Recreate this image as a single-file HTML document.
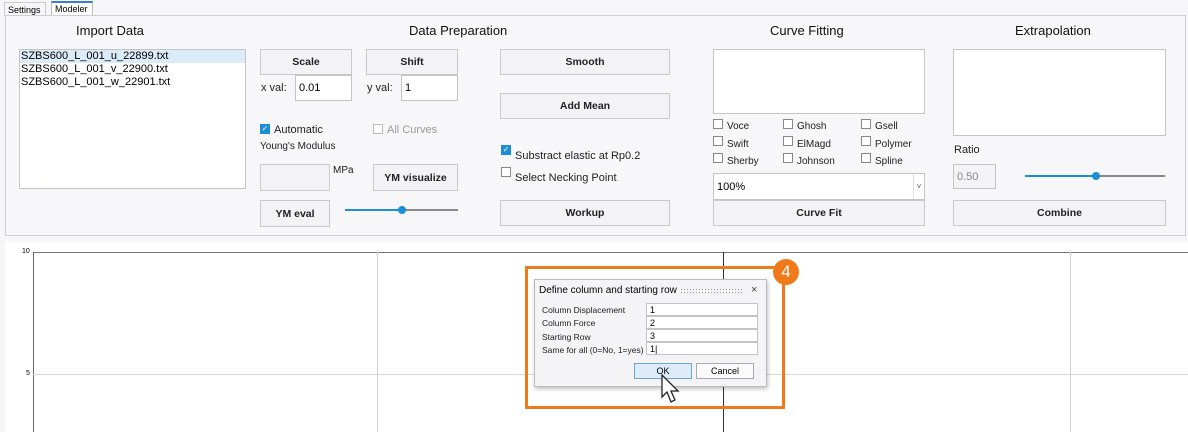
<!DOCTYPE html><html><head><style>
body{margin:0;width:1188px;height:432px;overflow:hidden;background:#f6f6f8;font-family:"Liberation Sans",sans-serif;position:relative}
div,span{position:absolute;box-sizing:border-box}
.b{background:#f3f3f5;border:1px solid #c9c9cc;font-size:10.5px;font-weight:bold;display:flex;align-items:center;justify-content:center;color:#222}
.in{background:#fff;border:1px solid #c4c4c6;font-size:11px;padding-left:3px;display:flex;align-items:center}
.t{font-size:13px;color:#111}
.s{font-size:10px;color:#222}
.cb{width:10px;height:10px;border:1px solid #888;background:#fff}
.ck{width:10px;height:10px;background:#1a8fd6;color:#fff;font-size:8px;line-height:10px;text-align:center}
</style></head><body>
<div style="left:4px;top:2px;width:42px;height:14px;border:1px solid #ccc;border-bottom:none;font-size:9px;padding:2px 3px">Settings</div>
<div style="left:51px;top:1px;width:42px;height:15px;border:1px solid #bbb;border-bottom:none;border-top:2px solid #3a7bd5;background:#fff;font-size:9px;padding:1px 3px">Modeler</div>
<div style="left:5px;top:15px;width:1181px;height:221px;border:1px solid #cfcfd2;background:#f7f7f9"></div>
<span class="t" style="left:76px;top:23px">Import Data</span>
<span class="t" style="left:409px;top:23px">Data Preparation</span>
<span class="t" style="left:770px;top:23px">Curve Fitting</span>
<span class="t" style="left:1015px;top:23px">Extrapolation</span>
<div style="left:19px;top:49px;width:227px;height:140px;background:#fff;border:1px solid #c4c4c6"></div>
<div style="left:20px;top:50px;width:225px;height:13px;background:#dcebf8"></div>
<span style="left:21px;top:50px;font-size:11px;line-height:13px">SZBS600_L_001_u_22899.txt<br>SZBS600_L_001_v_22900.txt<br>SZBS600_L_001_w_22901.txt</span>
<div class="b" style="left:260px;top:49px;width:92px;height:26px">Scale</div>
<div class="b" style="left:366px;top:49px;width:92px;height:26px">Shift</div>
<span class="s" style="left:261px;top:82px;font-size:11px">x val:</span>
<div class="in" style="left:295px;top:75px;width:57px;height:26px">0.01</div>
<span class="s" style="left:367px;top:82px;font-size:11px">y val:</span>
<div class="in" style="left:401px;top:75px;width:57px;height:26px">1</div>
<div class="ck" style="left:260px;top:124px">✓</div>
<span class="s" style="left:274px;top:124px;font-size:11px">Automatic</span>
<div class="cb" style="left:373px;top:124px;border-color:#bbb"></div>
<span class="s" style="left:387px;top:124px;font-size:11px;color:#999">All Curves</span>
<span class="s" style="left:260px;top:141px">Young's Modulus</span>
<div style="left:260px;top:164px;width:70px;height:27px;border:1px solid #ccc;background:#f3f3f5"></div>
<span class="s" style="left:333px;top:165px">MPa</span>
<div class="b" style="left:373px;top:164px;width:85px;height:27px">YM visualize</div>
<div class="b" style="left:260px;top:200px;width:70px;height:27px">YM eval</div>
<div style="left:345px;top:209px;width:57px;height:2px;background:#1a8fd6"></div>
<div style="left:402px;top:209px;width:56px;height:2px;background:#888"></div>
<div style="left:398px;top:206px;width:8px;height:8px;border-radius:50%;background:#1a8fd6"></div>
<div class="b" style="left:500px;top:49px;width:170px;height:26px">Smooth</div>
<div class="b" style="left:500px;top:93px;width:170px;height:26px">Add Mean</div>
<div class="ck" style="left:501px;top:145px">✓</div>
<span class="s" style="left:515px;top:150px;font-size:11px">Substract elastic at Rp0.2</span>
<div class="cb" style="left:501px;top:167px"></div>
<span class="s" style="left:515px;top:172px;font-size:11px">Select Necking Point</span>
<div class="b" style="left:500px;top:200px;width:170px;height:26px">Workup</div>
<div style="left:713px;top:49px;width:212px;height:65px;background:#fff;border:1px solid #c4c4c6"></div>
<div class="cb" style="left:713px;top:119px"></div><span class="s" style="left:727px;top:121px">Voce</span>
<div class="cb" style="left:713px;top:136px"></div><span class="s" style="left:727px;top:139px">Swift</span>
<div class="cb" style="left:713px;top:153px"></div><span class="s" style="left:727px;top:156px">Sherby</span>
<div class="cb" style="left:783px;top:119px"></div><span class="s" style="left:797px;top:121px">Ghosh</span>
<div class="cb" style="left:783px;top:136px"></div><span class="s" style="left:797px;top:139px">ElMagd</span>
<div class="cb" style="left:783px;top:153px"></div><span class="s" style="left:797px;top:156px">Johnson</span>
<div class="cb" style="left:861px;top:119px"></div><span class="s" style="left:875px;top:121px">Gsell</span>
<div class="cb" style="left:861px;top:136px"></div><span class="s" style="left:875px;top:139px">Polymer</span>
<div class="cb" style="left:861px;top:153px"></div><span class="s" style="left:875px;top:156px">Spline</span>
<div class="in" style="left:713px;top:173px;width:212px;height:27px">100%</div>
<div style="left:913px;top:174px;width:11px;height:25px;border-left:1px solid #ddd;font-size:8px;color:#555;text-align:center;line-height:25px">˅</div>
<div class="b" style="left:713px;top:200px;width:212px;height:26px">Curve Fit</div>
<div style="left:953px;top:49px;width:213px;height:87px;background:#fff;border:1px solid #c4c4c6"></div>
<span class="s" style="left:954px;top:144px;font-size:11px">Ratio</span>
<div class="in" style="left:953px;top:164px;width:43px;height:25px;background:#f3f3f5;color:#888">0.50</div>
<div style="left:1025px;top:175px;width:71px;height:2px;background:#1a8fd6"></div>
<div style="left:1096px;top:175px;width:69px;height:2px;background:#888"></div>
<div style="left:1092px;top:172px;width:8px;height:8px;border-radius:50%;background:#1a8fd6"></div>
<div class="b" style="left:953px;top:200px;width:213px;height:26px">Combine</div>
<div style="left:5px;top:242px;width:1183px;height:190px;background:#fff"></div>
<div style="left:33px;top:252px;width:1px;height:180px;background:#666"></div>
<div style="left:33px;top:252px;width:1155px;height:1px;background:#777"></div>
<div style="left:33px;top:374px;width:1155px;height:1px;background:#d8d8d8"></div>
<div style="left:377px;top:252px;width:1px;height:180px;background:#d0d0d0"></div>
<div style="left:723px;top:252px;width:1px;height:180px;background:#333"></div>
<div style="left:1070px;top:252px;width:1px;height:180px;background:#d0d0d0"></div>
<span style="left:22px;top:248px;font-size:7px">10</span>
<span style="left:26px;top:370px;font-size:7px">5</span>
<div style="left:534px;top:279px;width:233px;height:108px;background:#f4f4f6;border:1px solid #bbb;box-shadow:1px 2px 4px rgba(0,0,0,.25)"></div>
<span style="left:539px;top:285px;font-size:10px">Define column and starting row</span>
<div style="left:680px;top:288px;width:64px;height:6px;background-image:radial-gradient(circle,#999 0.7px,transparent 0.8px);background-size:3px 3px"></div>
<span style="left:751px;top:284px;font-size:11px;color:#444">×</span>
<span class="s" style="left:542px;top:304px;font-size:8.5px;line-height:13.3px">Column Displacement<br>Column Force<br>Starting Row<br>Same for all (0=No, 1=yes)</span>
<div class="in" style="left:646px;top:303px;width:112px;height:13px;font-size:9px">1</div>
<div class="in" style="left:646px;top:316px;width:112px;height:13px;font-size:9px">2</div>
<div class="in" style="left:646px;top:329px;width:112px;height:13px;font-size:9px">3</div>
<div class="in" style="left:646px;top:342px;width:112px;height:13px;font-size:9px">1|</div>
<div style="left:634px;top:363px;width:58px;height:16px;background:#dcecf9;border:1px solid #6aa6d8;font-size:9px;text-align:center;line-height:14px">OK</div>
<div style="left:696px;top:363px;width:58px;height:16px;background:#fafafa;border:1px solid #aaa;font-size:9px;text-align:center;line-height:14px">Cancel</div>
<div style="left:525px;top:266px;width:260px;height:143px;border:3px solid #f07a1a"></div>
<div style="left:773px;top:259px;width:26px;height:26px;border-radius:50%;background:#f07a1a;color:#fff;font-size:17px;text-align:center;line-height:26px">4</div>
<svg style="position:absolute;left:660px;top:374px" width="24" height="32" viewBox="0 0 24 32"><path d="M2 1 L2 23 L7 18 L11 28 L15 26 L11 17 L18 17 Z" fill="#fff" stroke="#222" stroke-width="1.3"/></svg>
</body></html>
